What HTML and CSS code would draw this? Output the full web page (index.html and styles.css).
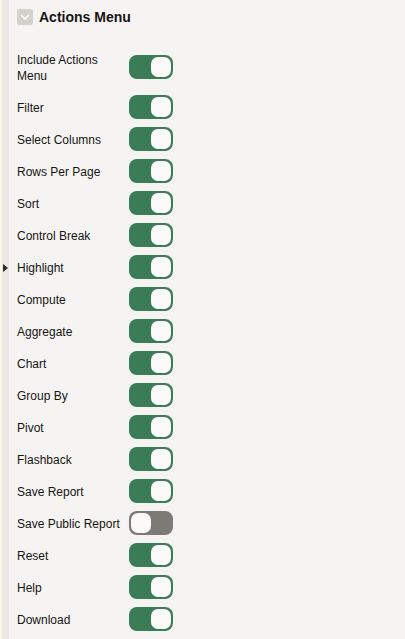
FILE: index.html
```html
<!DOCTYPE html>
<html>
<head>
<meta charset="utf-8">
<link rel="stylesheet" href="styles.css">
</head>
<body>
<div class="frame">
  <div class="edge">
    <div class="edge-cream"></div>
    <div class="edge-gray"><span class="handle"></span></div>
  </div>
  <div class="panel">
    <div class="header">
      <span class="collapse">
        <svg width="16" height="16" viewBox="0 0 16 16"><path d="M4.5 6.5 L8 10 L11.5 6.5" fill="none" stroke="#fff" stroke-width="1.6" stroke-linecap="round" stroke-linejoin="round"/></svg>
      </span>
      <span class="title">Actions Menu</span>
    </div>
    <div class="list">
      <div class="row"><span class="label">Include Actions Menu</span><span class="toggle on"></span></div>
      <div class="row"><span class="label">Filter</span><span class="toggle on"></span></div>
      <div class="row"><span class="label">Select Columns</span><span class="toggle on"></span></div>
      <div class="row"><span class="label">Rows Per Page</span><span class="toggle on"></span></div>
      <div class="row"><span class="label">Sort</span><span class="toggle on"></span></div>
      <div class="row"><span class="label">Control Break</span><span class="toggle on"></span></div>
      <div class="row"><span class="label">Highlight</span><span class="toggle on"></span></div>
      <div class="row"><span class="label">Compute</span><span class="toggle on"></span></div>
      <div class="row"><span class="label">Aggregate</span><span class="toggle on"></span></div>
      <div class="row"><span class="label">Chart</span><span class="toggle on"></span></div>
      <div class="row"><span class="label">Group By</span><span class="toggle on"></span></div>
      <div class="row"><span class="label">Pivot</span><span class="toggle on"></span></div>
      <div class="row"><span class="label">Flashback</span><span class="toggle on"></span></div>
      <div class="row"><span class="label">Save Report</span><span class="toggle on"></span></div>
      <div class="row"><span class="label">Save Public Report</span><span class="toggle off"></span></div>
      <div class="row"><span class="label">Reset</span><span class="toggle on"></span></div>
      <div class="row"><span class="label">Help</span><span class="toggle on"></span></div>
      <div class="row"><span class="label">Download</span><span class="toggle on"></span></div>
    </div>
  </div>
</div>
</body>
</html>
```

FILE: styles.css
```css
html, body {
  margin: 0;
  padding: 0;
  background: #f5f4f2;
}
body {
  font-family: "Liberation Sans", Arial, sans-serif;
  color: #161513;
  width: 405px;
  height: 639px;
  overflow: hidden;
}
.frame {
  display: flex;
  min-height: 639px;
}
.edge {
  display: flex;
  flex: 0 0 9px;
}
.edge-cream {
  width: 2px;
  background: #fbf5e4;
}
.edge-gray {
  width: 7px;
  background: #ebe8e4;
  position: relative;
}
.handle {
  position: absolute;
  left: 1px;
  top: 264px;
  width: 0;
  height: 0;
  border-top: 4px solid transparent;
  border-bottom: 4px solid transparent;
  border-left: 5px solid #2b2926;
}
.panel {
  flex: 1;
  padding-left: 8px;
}
.header {
  height: 34px;
  display: flex;
  align-items: center;
  gap: 6px;
}
.collapse {
  width: 16px;
  height: 16px;
  border-radius: 2px;
  background: #d4d0cc;
  display: flex;
}
.title {
  font-size: 14px;
  font-weight: bold;
  color: #161513;
}
.list {
  padding-top: 9px;
}
.row {
  display: flex;
  align-items: center;
}
.label {
  width: 112px;
  font-size: 12px;
  line-height: 16px;
  padding: 9px 0 7px;
}
.toggle {
  width: 44px;
  height: 24px;
  border-radius: 8px;
  position: relative;
  box-sizing: border-box;
}
.toggle.on {
  background: #3a7c55;
}
.toggle.off {
  background: #7d7974;
}
.toggle::after {
  content: "";
  position: absolute;
  top: 2px;
  width: 20px;
  height: 20px;
  border-radius: 7px;
  background: #fbfaf9;
}
.toggle.on::after {
  right: 2px;
}
.toggle.off::after {
  left: 2px;
}
```
